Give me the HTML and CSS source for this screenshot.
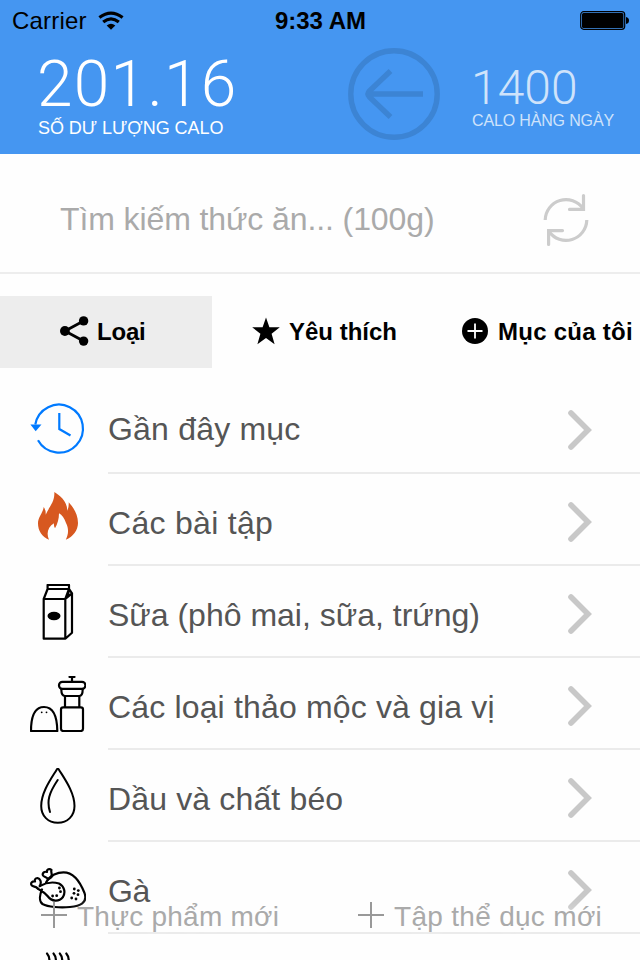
FILE: index.html
```html
<!DOCTYPE html>
<html lang="vi">
<head>
<meta charset="utf-8">
<title>Calo</title>
<link rel="stylesheet" href="styles.css">
</head>
<body>
<div class="screen">
  <header class="header">
    <div class="status">
      <div class="carrier"><span>Carrier</span>
        <svg class="wifi" width="26" height="20" viewBox="0 0 26 20" fill="none" stroke="#000" stroke-width="3.2"><path d="M1.4 6.6Q13 -2.2 24.6 6.6M5.2 11Q13 4.6 20.8 11"/><path d="M8.7 14.6Q13 11 17.3 14.6L13 18.8Z" fill="#000" stroke="none"/></svg>
      </div>
      <div class="time">9:33 AM</div>
      <svg class="battery" width="50" height="20" viewBox="0 0 50 20"><rect x=".7" y=".7" width="44" height="17.6" rx="3" fill="none" stroke="#000" stroke-width="1.2"/><rect x="2" y="2" width="41.4" height="15" rx="1.5"/><path d="M46 6q3 .5 3 3.5t-3 3.5z"/></svg>
    </div>
    <div class="summary">
      <div class="balance"><div class="big">201.16</div><div class="label">SỐ DƯ LƯỢNG CALO</div></div>
      <svg class="back" width="92" height="92" viewBox="0 0 92 92" fill="none" stroke="#3c84d4" stroke-width="5.4"><circle cx="46" cy="46" r="43.2"/><path d="M75 46H20M42.5 23L21.5 43Q18.5 46 21.5 49L42.5 69"/></svg>
      <div class="daily"><div class="mid">1400</div><div class="label">CALO HÀNG NGÀY</div></div>
    </div>
  </header>

  <div class="search">
    <span class="placeholder">Tìm kiếm thức ăn... (100g)</span>
    <svg width="46" height="54" viewBox="0 0 46 54" fill="none" stroke="#ccc" stroke-width="3.2"><path d="M2.2 27A20.8 20.8 0 0 1 40 15.5M43.8 27A20.8 20.8 0 0 1 6 38.5"/><path stroke-linecap="round" d="M40.5 2.5V16.4H26.5M5.6 51.5V37.6H19.5"/></svg>
  </div>

  <nav class="tabs">
    <div class="tab active">
      <svg width="29" height="30" viewBox="0 0 29 30"><path d="M23.5 5L5 15L23.5 25" fill="none" stroke="#000" stroke-width="2.8"/><circle cx="23.6" cy="4.9" r="4.7"/><circle cx="4.9" cy="15" r="4.9"/><circle cx="23.6" cy="25.1" r="4.7"/></svg>
      <span class="t1">Loại</span>
    </div>
    <div class="tab second">
      <svg width="28" height="28" viewBox="0 0 28 28"><path d="M14 .5L17.4 10.2H27.8L19.6 16.7L22.6 27.2L14 21L5.4 27.2L8.4 16.7L.2 10.2H10.6Z"/></svg>
      <span class="t2">Yêu thích</span>
    </div>
    <div class="tab third">
      <svg width="26" height="26" viewBox="0 0 26 26"><circle cx="13" cy="13" r="13"/><path d="M13 5.5V20.5M5.5 13H20.5" stroke="#fff" stroke-width="1.8"/></svg>
      <span class="t3">Mục của tôi</span>
    </div>
  </nav>

  <main class="list">
    <div class="row first">
      <svg class="icon" viewBox="0 0 56 56" fill="none" stroke="#007aff" stroke-width="2.2"><path d="M5.3 24.500A24 24 0 1 1 8 40.300M29.300 13V29L40.500 35.500"/><path d="M.4 24.400H11.500L5.700 31.200Z" fill="#007aff" stroke="none"/></svg>
      <div class="body"><span class="n1">Gần đây mục</span><svg class="chev" viewBox="0 0 24 40"><path d="M3 3L20 20L3 37"/></svg></div>
    </div>
    <div class="row">
      <svg class="icon" viewBox="0 0 56 56" fill="#d75820"><path d="M24.3 0C29 3 37.500 9 37.300 18.700Q39 15 38.700 10.300C43 15 48 22 48 31C48 38 43 45 35.800 47.700C38.500 42 39 37 36 31C34.500 26.500 32 23 29 21.300C29 27 27.500 32 25 36.300Q23.600 34 24 31.300C18 35 16 41 19 47.700C12 45 8 39 8 31.300C8 25 13 21 13.700 15Q16 18 15.700 22.700C19 15 25 10 24.300 0Z"/></svg>
      <div class="body"><span class="n2">Các bài tập</span><svg class="chev" viewBox="0 0 24 40"><path d="M3 3L20 20L3 37"/></svg></div>
    </div>
    <div class="row">
      <svg class="icon line" viewBox="0 0 56 56"><path d="M13.700 15H35.300V54.700H13.700ZL17.600 5V1H39V5L35.300 15L42 9.300V48.700L35.300 54.700M17.600 5H39L42 9.300M39 5.500L37.800 12"/><ellipse cx="24" cy="32" rx="6.500" ry="4.200" fill="#000" stroke="none"/></svg>
      <div class="body"><span class="n3">Sữa (phô mai, sữa, trứng)</span><svg class="chev" viewBox="0 0 24 40"><path d="M3 3L20 20L3 37"/></svg></div>
    </div>
    <div class="row">
      <svg class="icon line" viewBox="0 0 56 56"><path d="M1 55Q1 31 14 31T27.300 55Z"/><rect x="31" y="31.400" width="22" height="23.600" rx="2.200"/><path d="M35 20V31M49.300 20V31M42 1V6M39.500 1H44.500M31.300 13Q31.300 20 35 20H49.300Q52.700 20 52.700 13"/><rect x="29" y="5.900" width="26.400" height="7" rx="3.400"/><circle cx="11.700" cy="36.300" r=".9" fill="#000" stroke="none"/><circle cx="16.500" cy="36.300" r=".9" fill="#000" stroke="none"/></svg>
      <div class="body"><span class="n4">Các loại thảo mộc và gia vị</span><svg class="chev" viewBox="0 0 24 40"><path d="M3 3L20 20L3 37"/></svg></div>
    </div>
    <div class="row">
      <svg class="icon line drop" viewBox="0 0 56 56"><path d="M26.800 1.400Q27.800 .3 28.800 1.400C34 10 44.500 24 44.500 38C44.500 48 37.500 54.800 27.800 54.800S11.200 48 11.200 38C11.200 24 21.600 10 26.800 1.400ZM27.700 12C19 25 16.500 33 20 44"/></svg>
      <div class="body"><span class="n5">Dầu và chất béo</span><svg class="chev" viewBox="0 0 24 40"><path d="M3 3L20 20L3 37"/></svg></div>
    </div>
    <div class="row">
      <svg class="icon line" viewBox="0 0 56 56"><path d="M16 22.500C20 15 28 12.300 33.500 12.300C45 12.300 51 24 54.500 33C58 43 50 46 40 47C30 48 18 47 12.500 44C8.500 41 10 34 12 29.500M9.800 26C17 22 24 22 29 23.500C34 26 36 32 33 37C29 42 22 42 17.500 36C14 31.500 9.500 30 7.500 28.300"/><path d="M9.800 26C12 22 10 18.500 7.500 18C5 18 4.500 20 5 21.500C2 21 .7 23 1.300 24.700C2.500 27.300 5.500 26 7.500 28.300M18 19.500L21.500 17C22.500 14 20.500 11.500 21.500 10C19.500 8 16.500 9.500 17 12C14 11 12 13.500 13 15.500C14.300 17.500 17 16.500 18 19.500"/><g fill="#000" stroke="none"><circle cx="29.400" cy="28" r="1.400"/><circle cx="30.500" cy="31.700" r="1.400"/><circle cx="26.700" cy="35.700" r="1.400"/><circle cx="22.600" cy="36" r="1.400"/><circle cx="44.300" cy="29" r="1.400"/><circle cx="48.300" cy="30.600" r="1.400"/><circle cx="44" cy="33.300" r="1.400"/><circle cx="48" cy="34.700" r="1.400"/><circle cx="41.700" cy="38" r="1.400"/><circle cx="46" cy="39" r="1.400"/></g></svg>
      <div class="body"><span class="n6">Gà</span><svg class="chev" viewBox="0 0 24 40"><path d="M3 3L20 20L3 37"/></svg></div>
    </div>
    <div class="row">
      <svg class="icon line" viewBox="0 0 56 56"><path d="M17 1.500q3.500 4 2 10M23.500 1.500q3.500 4 2 10M29.800 1.500q3.500 4 2 10M36.300 1.500q3.500 4 2 10"/></svg>
      <div class="body"></div>
    </div>
  </main>

  <footer class="actions">
    <div class="action"><svg width="26" height="26" viewBox="0 0 26 26"><path d="M13 0V26M0 13H26"/></svg><span class="a1">Thực phẩm mới</span></div>
    <div class="action"><svg width="26" height="26" viewBox="0 0 26 26"><path d="M13 0V26M0 13H26"/></svg><span class="a2">Tập thể dục mới</span></div>
  </footer>
</div>
</body>
</html>
```
FILE: styles.css
```css
* { box-sizing: border-box; }
body { margin: 0; font-family: "Liberation Sans", sans-serif; background: #fefefe; }
svg { display: block; flex: none; }
span { white-space: nowrap; }
.screen { position: relative; width: 640px; height: 960px; overflow: hidden; background: #fefefe; }

.header { height: 154px; background: #4596f1; }
.status { height: 40px; display: grid; grid-template-columns: 1fr auto 1fr; align-items: center; padding: 1px 11px 0 12px; font-size: 24px; line-height: 40px; }
.carrier { display: flex; align-items: center; gap: 11px; letter-spacing: 0.2px; }
.wifi { margin-top: -1px; }
.time { font-weight: 700; font-size: 24px; letter-spacing: 0; }
.battery { justify-self: end; margin-right: -1px; }
.summary { height: 114px; display: flex; align-items: flex-start; color: #fff; }
.balance { width: 310px; margin-left: 38px; padding-top: 13px; }
.big { font-family: Roboto, sans-serif; font-weight: 300; font-size: 64px; line-height: 63px; letter-spacing: 1.3px; margin-left: -1px; }
.label { white-space: nowrap; font-size: 18px; line-height: 24px; letter-spacing: -0.05px; }
.back { margin-top: 8px; }
.daily { margin-left: 32px; padding-top: 20px; color: #cfe3fb; }
.mid { font-family: Roboto, sans-serif; font-weight: 300; font-size: 48px; line-height: 55px; letter-spacing: 0; margin-left: -1px; }
.daily .label { font-size: 16px; line-height: 16px; margin-top: -2px; letter-spacing: -0.15px; }

.search { height: 120px; border-bottom: 2px solid #ededed; display: flex; align-items: center; justify-content: space-between; padding: 13px 51px 0 60px; }
.placeholder { font-size: 32px; color: #aaa; line-height: 40px; letter-spacing: -0.1px; margin-top: -2px; }

.tabs { margin-top: 22px; height: 72px; display: grid; grid-template-columns: 212px 216px 212px; font-weight: 700; font-size: 24px; }
.tab { display: flex; align-items: center; gap: 8px; padding-left: 60px; }
.tab svg { margin-top: -2px; }
.active { background: #ededed; }
.second { padding-left: 40px; gap: 9px; }
.third { padding-left: 34px; gap: 10px; }
.t1 { letter-spacing: -0.2px; }
.t3 { letter-spacing: 0.27px; }

.list { margin-top: 14px; }
.row { height: 92px; display: flex; padding-left: 30px; }
.icon { width: 56px; height: 56px; margin-top: 18px; }
.line { fill: none; stroke: #000; stroke-width: 2.2; stroke-linejoin: round; stroke-linecap: round; }
.drop { stroke-width: 2; }
.body { flex: 1; margin-left: 22px; border-bottom: 2px solid #ebebeb; display: flex; align-items: center; justify-content: space-between; padding: 7px 48px 0 0; font-size: 32px; color: #555; }
.body span { padding-top: 2px; }
.first .body span { padding: 0 0 2px; }
.n1 { letter-spacing: 0.2px; }
.n2 { letter-spacing: 0.3px; }
.n4 { letter-spacing: 0.16px; }
.n5 { letter-spacing: 0.15px; }
.n6 { letter-spacing: -0.5px; }
.chev { width: 24px; height: 40px; margin-top: -1px; fill: none; stroke: #c8c8c8; stroke-width: 5.6; stroke-linecap: round; }

.actions { position: absolute; left: 0; right: 0; bottom: 23px; height: 40px; display: grid; grid-template-columns: 317px 1fr; padding-left: 41px; }
.action { display: flex; align-items: center; gap: 10px; font-size: 28px; color: #aaa; text-shadow: 0 0 16px #fff; }
.action svg { stroke: #999; stroke-width: 2; fill: none; margin-top: -4px; }
.a1 { letter-spacing: 0.25px; }
.a2 { letter-spacing: 0.3px; }
```
